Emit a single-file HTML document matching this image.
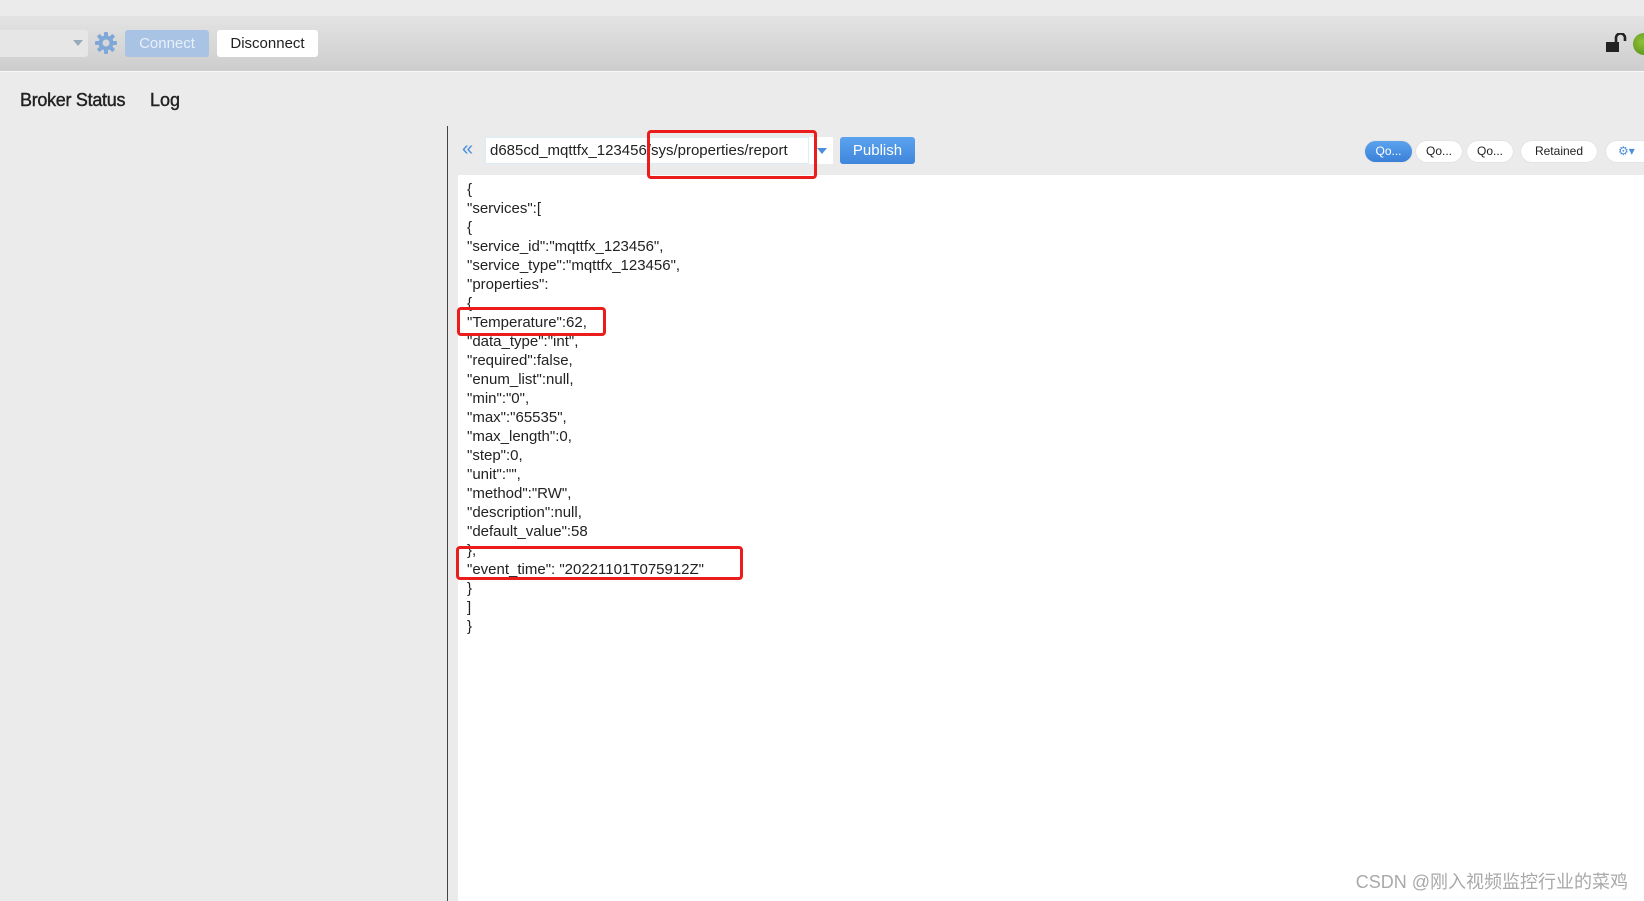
<!DOCTYPE html>
<html><head><meta charset="utf-8"><style>
*{margin:0;padding:0;box-sizing:border-box}
body{width:1644px;height:901px;background:#ebebeb;position:relative;overflow:hidden;font-family:"Liberation Sans","Noto Sans CJK SC",sans-serif;color:#222}
.a{position:absolute}
.tb{left:0;top:16px;width:1644px;height:56px;background:linear-gradient(#e3e3e3,#cdcdcd);border-bottom:1px solid #f8f8f8}
.btn{position:absolute;border-radius:3px;font-size:15px;text-align:center;line-height:27px}
.pill{position:absolute;top:141px;height:21px;border-radius:11px;background:#fff;font-size:12px;text-align:center;line-height:21px;box-shadow:0 0 1px #bbb}
.code{left:467px;top:180px;font-size:15px;line-height:19px;color:#222;white-space:pre}
.red{position:absolute;border:3px solid #ea1c1c;border-radius:4px}
</style></head><body>
<div class="a tb"></div>
<div class="a" style="left:0;top:30px;width:88px;height:27px;background:#e6e6e6;border-radius:0 3px 3px 0"></div>
<div class="a" style="left:73px;top:40px;width:0;height:0;border-left:5px solid transparent;border-right:5px solid transparent;border-top:6px solid #9ab"></div>
<svg class="a" style="left:95px;top:32px" width="22" height="22" viewBox="0 0 22 22"><g fill="#7fa8d8"><circle cx="11" cy="11" r="7.5"/><rect x="9" y="0" width="4" height="22" rx="1"/><rect x="0" y="9" width="22" height="4" rx="1"/><rect x="9" y="0" width="4" height="22" rx="1" transform="rotate(45 11 11)"/><rect x="9" y="0" width="4" height="22" rx="1" transform="rotate(-45 11 11)"/></g><circle cx="11" cy="11" r="3.5" fill="#d8d8d8"/></svg>
<div class="btn" style="left:125px;top:30px;width:84px;height:27px;background:#a8c3e3;color:#e8f0fa">Connect</div>
<div class="btn" style="left:217px;top:30px;width:101px;height:27px;background:#fff;color:#222">Disconnect</div>
<svg class="a" style="left:1606px;top:33px" width="22" height="20" viewBox="0 0 22 20"><rect x="0" y="9" width="13" height="10" fill="#222"/><path d="M10 9V5a4.5 4.5 0 0 1 9 0v3" stroke="#222" stroke-width="2.6" fill="none"/></svg>
<div class="a" style="left:1633px;top:33px;width:22px;height:22px;border-radius:50%;background:radial-gradient(circle at 40% 40%,#8fc03a,#4f8a12)"></div>
<div class="a" style="left:20px;top:90px;font-size:18px;color:#222;-webkit-text-stroke:0.4px #222;letter-spacing:-0.3px">Broker Status</div>
<div class="a" style="left:150px;top:90px;font-size:18px;color:#222;-webkit-text-stroke:0.4px #222">Log</div>
<div class="a" style="left:447px;top:126px;width:1px;height:775px;background:#444"></div>
<div class="a" style="left:462px;top:138px;font-size:20px;color:#4a8fdc">«</div>
<div class="a" style="left:485px;top:137px;width:348px;height:27px;background:#fff"></div>
<div class="a" style="left:485px;top:137px;width:324px;height:27px;border:1px solid #dbeef8;background:#fff;overflow:hidden;white-space:nowrap;font-size:15px;line-height:25px;padding-left:4px;direction:rtl;text-align:left"><span style="direction:ltr;unicode-bidi:embed">d685cd_mqttfx_123456/sys/properties/report</span></div>
<div class="a" style="left:817px;top:148px;border-left:5px solid transparent;border-right:5px solid transparent;border-top:6px solid #4a8fdc"></div>
<div class="btn" style="left:840px;top:137px;width:75px;height:27px;background:linear-gradient(#5ba3ee,#3f86dc);color:#fff;font-size:15px">Publish</div>
<div class="pill" style="left:1365px;width:47px;background:linear-gradient(#5ba3ee,#3a80d8);color:#fff">Qo...</div>
<div class="pill" style="left:1416px;width:46px">Qo...</div>
<div class="pill" style="left:1467px;width:46px">Qo...</div>
<div class="pill" style="left:1521px;width:76px">Retained</div>
<div class="pill" style="left:1606px;width:50px;color:#4a8fdc;text-align:left;padding-left:12px">⚙▾</div>
<div class="a" style="left:458px;top:175px;width:1186px;height:726px;background:#fff"></div>
<div class="a code">{
"services":[
{
"service_id":"mqttfx_123456",
"service_type":"mqttfx_123456",
"properties":
{
"Temperature":62,
"data_type":"int",
"required":false,
"enum_list":null,
"min":"0",
"max":"65535",
"max_length":0,
"step":0,
"unit":"",
"method":"RW",
"description":null,
"default_value":58
},
"event_time": "20221101T075912Z"
}
]
}</div>
<div class="red" style="left:647px;top:130px;width:170px;height:49px"></div>
<div class="red" style="left:457px;top:307px;width:149px;height:29px"></div>
<div class="red" style="left:456px;top:546px;width:287px;height:34px"></div>
<div class="a" style="left:1336px;top:868px;font-size:18px;color:#a9a9a9;white-space:nowrap;text-align:right;width:292px">CSDN @刚入视频监控行业的菜鸡</div>
</body></html>
